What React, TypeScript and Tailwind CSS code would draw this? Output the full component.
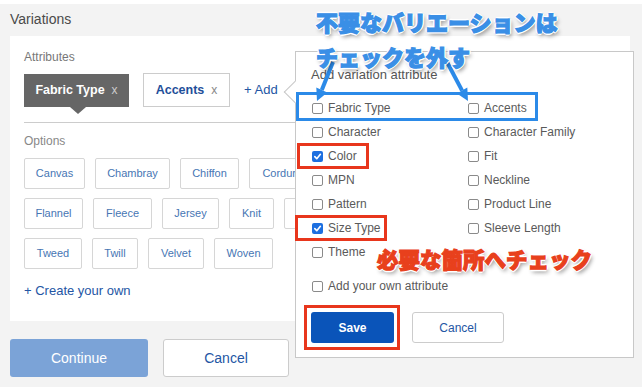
import React from "react";

const font = { fontFamily: '"Liberation Sans", Arial, sans-serif' };

const optionRows: { label: string; w: string }[][] = [
  [
    { label: "Canvas", w: "w-[61px]" },
    { label: "Chambray", w: "w-[75px]" },
    { label: "Chiffon", w: "w-[59px]" },
    { label: "Corduroy", w: "w-[72px]" },
  ],
  [
    { label: "Flannel", w: "w-[59px]" },
    { label: "Fleece", w: "w-[59px]" },
    { label: "Jersey", w: "w-[57px]" },
    { label: "Knit", w: "w-[45px]" },
    { label: "Lace", w: "w-[50px]" },
  ],
  [
    { label: "Tweed", w: "w-[58px]" },
    { label: "Twill", w: "w-[46px]" },
    { label: "Velvet", w: "w-[56px]" },
    { label: "Woven", w: "w-[59px]" },
  ],
];

const leftCol = [
  { label: "Fabric Type", checked: false },
  { label: "Character", checked: false },
  { label: "Color", checked: true },
  { label: "MPN", checked: false },
  { label: "Pattern", checked: false },
  { label: "Size Type", checked: true },
  { label: "Theme", checked: false },
];

const rightCol = [
  { label: "Accents", checked: false },
  { label: "Character Family", checked: false },
  { label: "Fit", checked: false },
  { label: "Neckline", checked: false },
  { label: "Product Line", checked: false },
  { label: "Sleeve Length", checked: false },
];

function Box({ checked }: { checked: boolean }) {
  if (checked) {
    return (
      <span className="w-[11px] h-[11px] rounded-[2px] bg-[#1d6fe0] flex items-center justify-center shrink-0">
        <svg width="9" height="9" viewBox="0 0 10 10">
          <path d="M2 5.2 L4.2 7.4 L8.2 2.6" stroke="#fff" strokeWidth="1.8" fill="none" strokeLinecap="round" strokeLinejoin="round" />
        </svg>
      </span>
    );
  }
  return <span className="w-[11px] h-[11px] rounded-[2px] border border-[#8a8a8a] bg-white shrink-0" />;
}

function CheckRow({ label, checked }: { label: string; checked: boolean }) {
  return (
    <div className="h-[24px] flex items-center gap-[5px] pl-[1px]">
      <Box checked={checked} />
      <span className="text-[12px] text-[#5a5a5a]">{label}</span>
    </div>
  );
}

const outline =
  "[text-shadow:1px_1px_0_#fff,-1px_-1px_0_#fff,1px_-1px_0_#fff,-1px_1px_0_#fff,0_2px_0_#fff,2px_0_0_#fff,-2px_0_0_#fff,0_-2px_0_#fff,2px_3px_4px_rgba(0,0,0,0.45)]";
const cjk = { fontFamily: '"Noto Sans CJK JP", sans-serif' };

export default function App() {
  return (
    <div className="w-[642px] h-[387px] bg-[#f3f3f3] relative overflow-hidden" style={font}>
      <div className="h-[4px] bg-white" />
      <div className="px-[10px]">
        <div className="h-[32px] pt-[5px] text-[14px] text-[#4a4a4a]">Variations</div>

        {/* カード */}
        <div className="w-[620px] bg-white pt-[13px] pb-[21px] px-[14px]">
          <div className="text-[12px] leading-[16px] text-[#777]">Attributes</div>
          <div className="flex items-center mt-[8px] gap-[14px]">
            <div className="relative h-[33px] w-[105px] bg-[#666] flex items-center justify-center gap-[7px]">
              <span className="text-[12.5px] font-bold text-white">Fabric Type</span>
              <span className="text-[12px] text-[#ccc]">x</span>
              <span className="absolute left-[46px] top-[33px] w-0 h-0 border-l-[8px] border-r-[8px] border-t-[7px] border-l-transparent border-r-transparent border-t-[#666]" />
            </div>
            <div className="h-[34px] w-[87px] border border-[#ccc] flex items-center justify-center gap-[7px]">
              <span className="text-[12.5px] font-bold text-[#1f4f9a]">Accents</span>
              <span className="text-[12px] text-[#888]">x</span>
            </div>
            <span className="text-[13px] text-[#2456a4]">+ Add</span>
          </div>

          <div className="h-px bg-[#ccc] mt-[15px]" />

          <div className="text-[12px] leading-[16px] text-[#888] mt-[10px]">Options</div>
          <div className="flex flex-col gap-[9px] mt-[9px]">
            {optionRows.map((row, i) => (
              <div key={i} className="flex gap-[10px]">
                {row.map((o) => (
                  <div
                    key={o.label}
                    className={`${o.w} h-[31px] border border-[#d6d6d6] rounded-[2px] flex items-center justify-center text-[11px] text-[#4776b4]`}
                  >
                    {o.label}
                  </div>
                ))}
              </div>
            ))}
          </div>

          <div className="mt-[13px] text-[13px] leading-[18px] text-[#2456a4]">+ Create your own</div>
        </div>

        {/* 下部ボタン */}
        <div className="flex gap-[15px] mt-[18px]">
          <div className="w-[138px] h-[38px] rounded-[3px] bg-[#7ba3d7] flex items-center justify-center text-[14px] text-white">
            Continue
          </div>
          <div className="w-[126px] h-[38px] rounded-[3px] bg-white border border-[#ccc] flex items-center justify-center text-[14px] text-[#2456a4]">
            Cancel
          </div>
        </div>
      </div>

      {/* ポップオーバー */}
      <div className="absolute left-[295px] top-[51px] w-[339px] h-[307px] bg-white border border-[#c8c8c8] pl-[15px] pt-[14px]">
        <span className="absolute left-[-9px] top-[32px] w-[16px] h-[16px] bg-white border-l border-b border-[#c8c8c8] rotate-45" />
        <div className="text-[13px] leading-[18px] text-[#555]">Add variation attribute</div>
        <div className="grid grid-cols-[156px_156px] mt-[12px]">
          <div>
            {leftCol.map((c) => (
              <CheckRow key={c.label} {...c} />
            ))}
          </div>
          <div>
            {rightCol.map((c) => (
              <CheckRow key={c.label} {...c} />
            ))}
          </div>
        </div>
        <div className="mt-[10px]">
          <CheckRow label="Add your own attribute" checked={false} />
        </div>
        <div className="flex gap-[18px] mt-[14px]">
          <div className="w-[83px] h-[31px] rounded-[3px] bg-[#0a54b9] flex items-center justify-center text-[12px] font-bold text-white">
            Save
          </div>
          <div className="w-[92px] h-[31px] rounded-[3px] border border-[#ccc] flex items-center justify-center text-[12px] text-[#2456a4]">
            Cancel
          </div>
        </div>
      </div>

      {/* 注釈の枠 */}
      <div className="absolute left-[296px] top-[92px] w-[242px] h-[29px] border-[3px] border-[#2b8ae8]" />
      <div className="absolute left-[297px] top-[143px] w-[72px] h-[26px] border-[3px] border-[#e8361c]" />
      <div className="absolute left-[295px] top-[215px] w-[92px] h-[26px] border-[3px] border-[#e8361c]" />
      <div className="absolute left-[304px] top-[305px] w-[96px] h-[45px] border-[3px] border-[#e8361c]" />

      {/* 矢印 */}
      <svg className="absolute left-0 top-0 pointer-events-none" width="642" height="387">
        <line x1="333" y1="62" x2="321.8" y2="90" stroke="#2b8ae8" strokeWidth="4" />
        <polygon points="317,101 327.3,92.4 316.3,87.6" fill="#2b8ae8" />
        <line x1="447" y1="62" x2="462.1" y2="90.6" stroke="#2b8ae8" strokeWidth="4" />
        <polygon points="468,101 467.3,87.6 456.9,93.6" fill="#2b8ae8" />
      </svg>

      {/* 注釈テキスト */}
      <div
        className={`absolute left-[316px] top-[7px] text-[22px] leading-[28px] font-black text-[#3a8fe6] [-webkit-text-stroke:1.2px_#3a8fe6] whitespace-nowrap ${outline}`}
        style={cjk}
      >
        不要なバリエーションは
      </div>
      <div
        className={`absolute left-[316px] top-[42px] text-[22px] leading-[28px] font-black text-[#3a8fe6] [-webkit-text-stroke:1.2px_#3a8fe6] whitespace-nowrap ${outline}`}
        style={cjk}
      >
        チェックを外す
      </div>
      <div
        className={`absolute left-[377px] top-[245px] text-[21.5px] leading-[28px] font-black text-[#e8401c] [-webkit-text-stroke:1.2px_#e8401c] whitespace-nowrap ${outline}`}
        style={cjk}
      >
        必要な箇所へチェック
      </div>
    </div>
  );
}
